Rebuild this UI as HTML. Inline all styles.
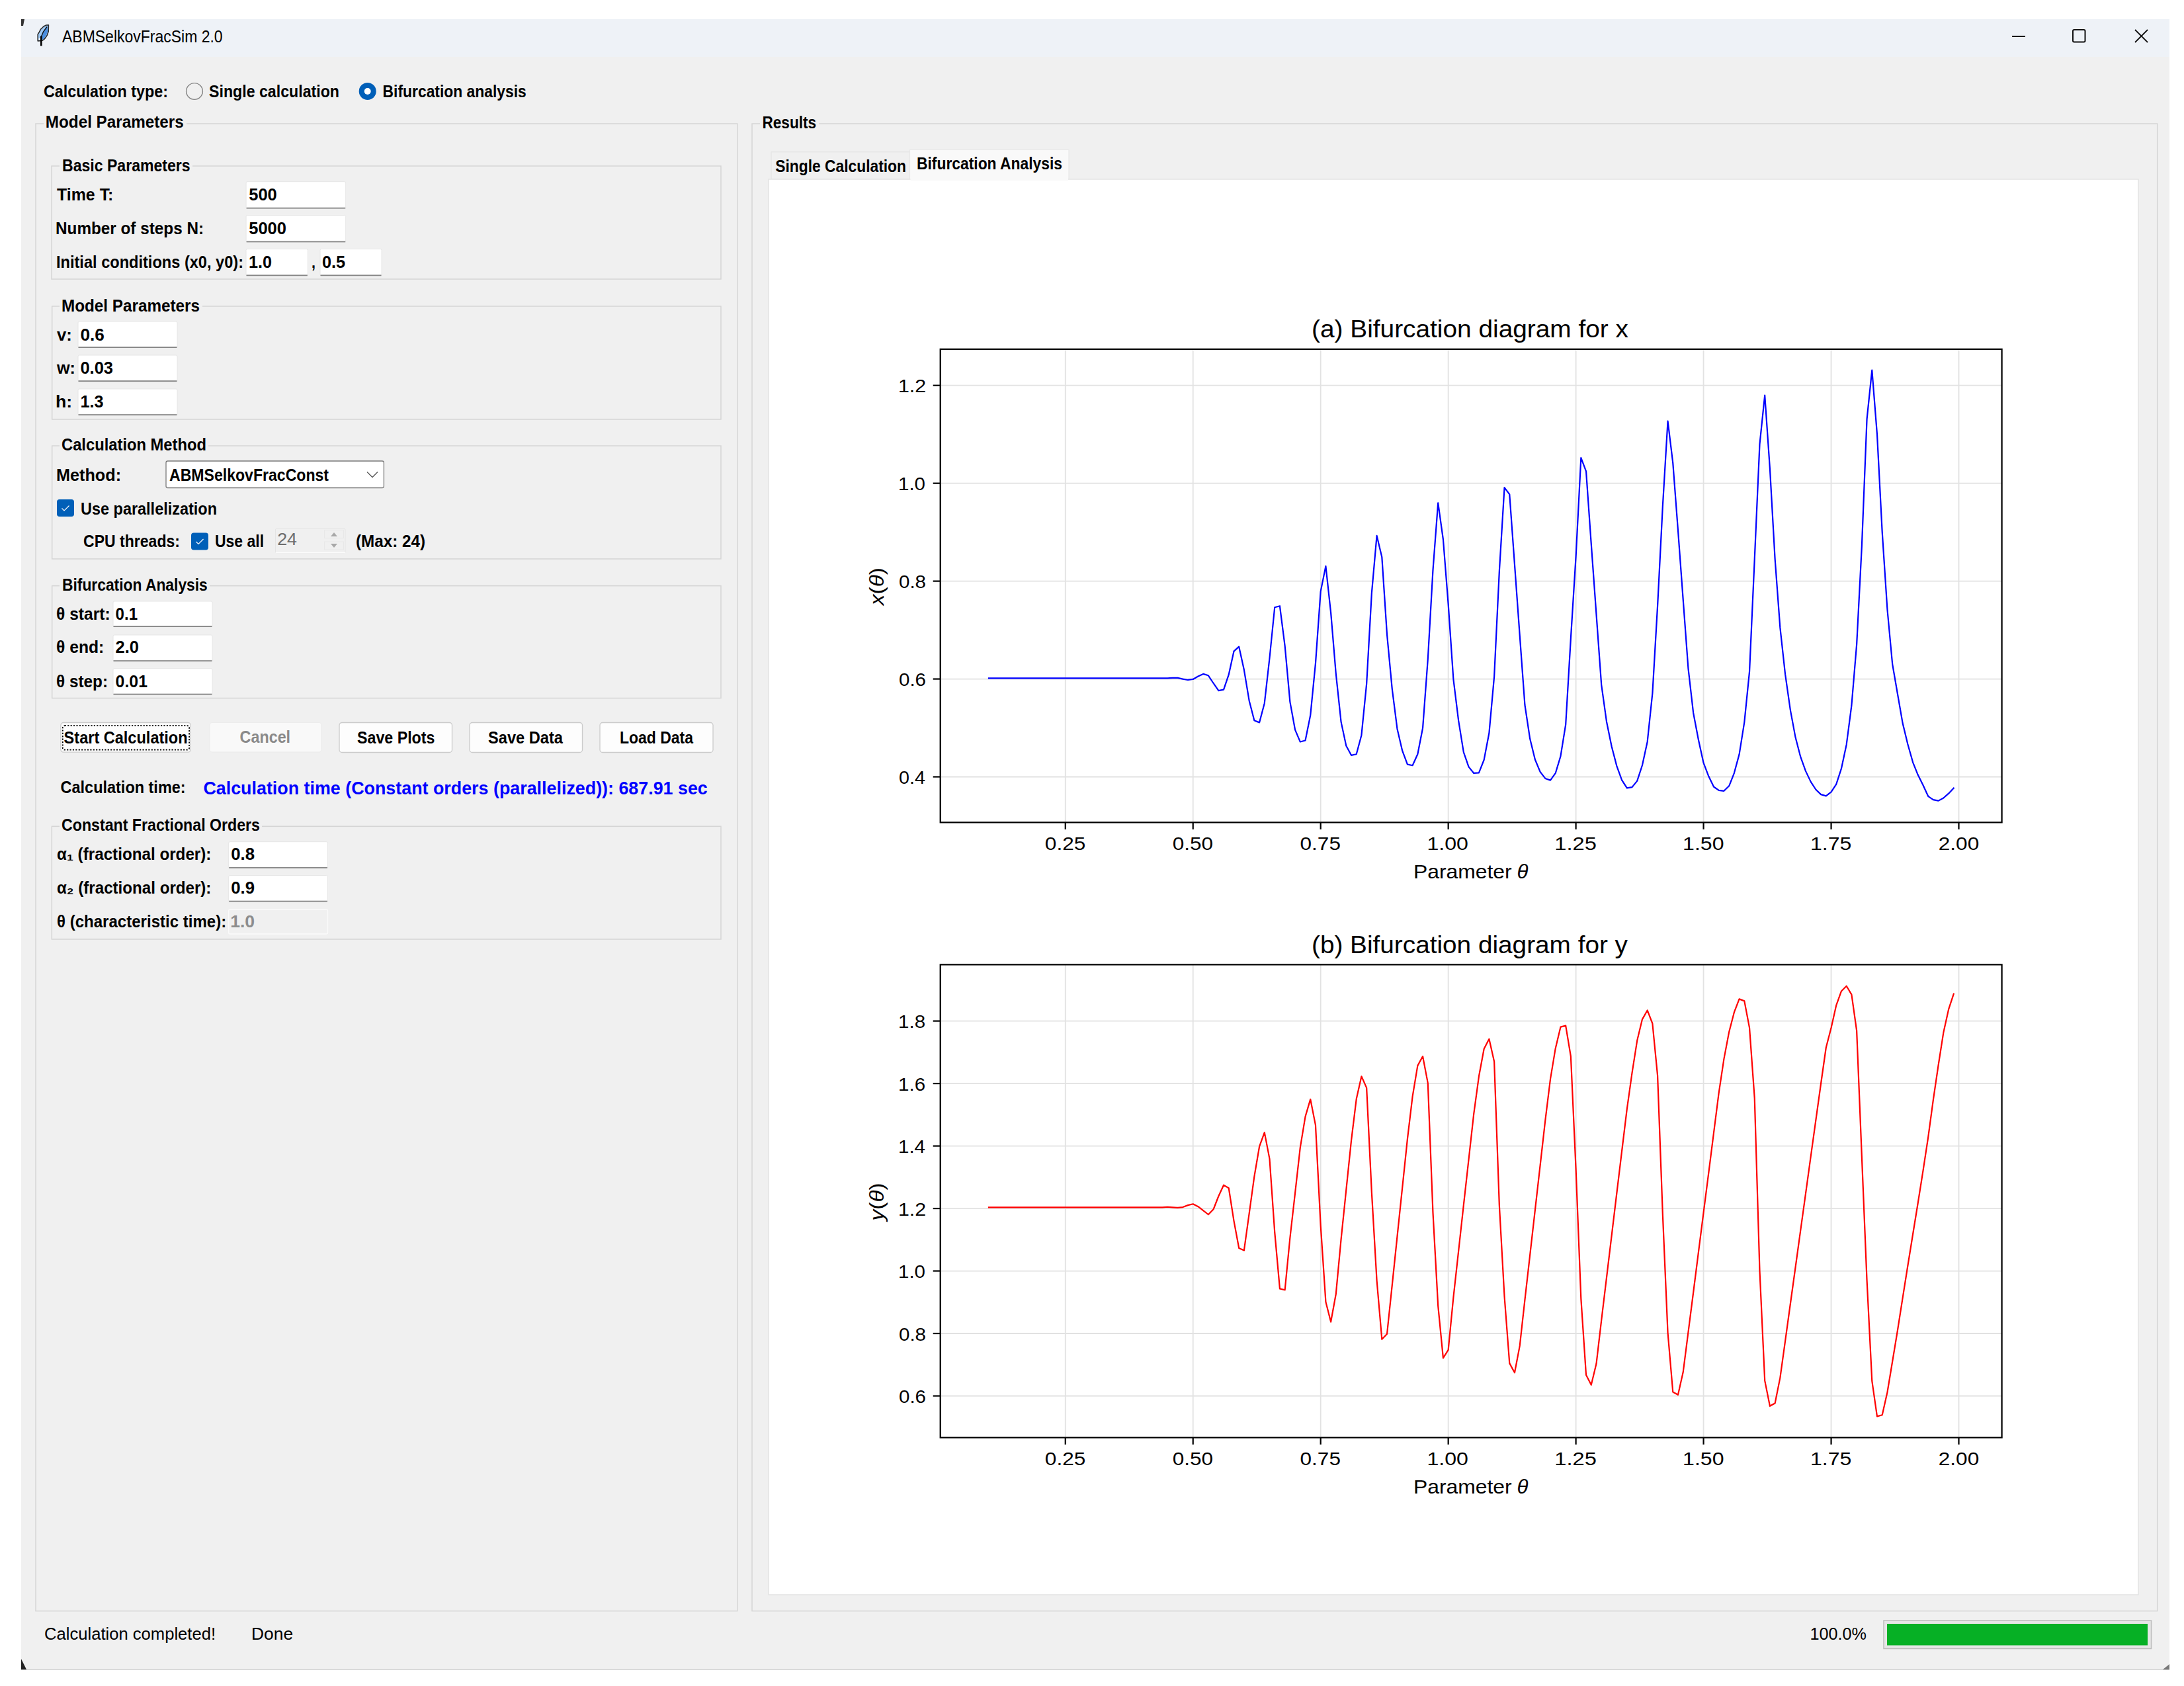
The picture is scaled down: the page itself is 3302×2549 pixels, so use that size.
<!DOCTYPE html>
<html><head><meta charset="utf-8"><title>ABMSelkovFracSim 2.0</title>
<style>html,body{margin:0;padding:0;background:#fff;width:3302px;height:2549px;overflow:hidden} text{font-family:"Liberation Sans",sans-serif}</style>
</head><body>
<svg width="3302" height="2549" viewBox="0 0 3302 2549" style="display:block"><rect x="0.00" y="0.00" width="3302.00" height="2549.00" fill="#ffffff"/>
<rect x="32.00" y="86.00" width="3248.00" height="2438.00" fill="#f0f0f0"/>
<rect x="32.00" y="29.00" width="3248.00" height="57.00" fill="#eef2f7"/>
<line x1="32.00" y1="2524.50" x2="3280.00" y2="2524.50" stroke="#c8c8c8" stroke-width="1.2"/>
<path d="M32 29 L37 29 L35 39 L32 39 Z" fill="#333"/>
<path d="M32 2508 L32 2524 L40 2524 Z" fill="#222"/>
<path d="M3280 2516 L3280 2524 L3270 2524 Z" fill="#777"/>
<g class="ic" transform="translate(50,32)"><path d="M23.4 5.7 L23.2 15.4 L21.2 21.4 L18.9 24.9 L16.2 27.9 L13.9 29.4 L7.2 29.9 L7.2 19.9 L9.5 16.2 L11.7 12 L13.9 10 L15.9 8 L19.9 6 Z" fill="#9ec9f4" stroke="#2a2a2a" stroke-width="1.6" stroke-linejoin="round"/><path d="M21.5 7.5 L22 15.4 L20.2 21 L17.9 24.3 L15.5 27 L13.4 28.4 L12.4 27.2 L13 21.5 L15.5 15.5 Z" fill="#4a8fe0"/><path d="M21 8.5 L15.5 16 L13 22 L12.4 27.5" fill="none" stroke="#111" stroke-width="1.4"/><path d="M12.3 22.5 L12.3 37.4" stroke="#000" stroke-width="2.6"/><rect x="8.5" y="26" width="2.5" height="2.5" fill="#fff"/></g>
<text x="94.00" y="63.80" font-size="25.5" font-family="Liberation Sans" fill="#000" textLength="242.60" lengthAdjust="spacingAndGlyphs">ABMSelkovFracSim 2.0</text>
<line x1="3042.00" y1="55.00" x2="3062.00" y2="55.00" stroke="#111" stroke-width="2"/>
<rect x="3134.00" y="45.00" width="18.50" height="18.50" fill="none" stroke="#111" stroke-width="2" rx="2"/>
<line x1="3228.00" y1="45.00" x2="3247.00" y2="64.00" stroke="#111" stroke-width="1.8"/>
<line x1="3247.00" y1="45.00" x2="3228.00" y2="64.00" stroke="#111" stroke-width="1.8"/>
<text x="66.00" y="147.00" font-size="25" font-family="Liberation Sans" fill="#000" font-weight="bold" textLength="188.01" lengthAdjust="spacingAndGlyphs">Calculation type:</text>
<circle cx="294" cy="138" r="12.4" fill="none" stroke="#858585" stroke-width="1.4"/>
<text x="316.00" y="147.00" font-size="25" font-family="Liberation Sans" fill="#000" font-weight="bold" textLength="197.00" lengthAdjust="spacingAndGlyphs">Single calculation</text>
<circle cx="555.7" cy="138" r="13" fill="#005fb8"/><circle cx="555.7" cy="138" r="5" fill="#ffffff"/>
<text x="578.60" y="146.80" font-size="25" font-family="Liberation Sans" fill="#000" font-weight="bold" textLength="217.22" lengthAdjust="spacingAndGlyphs">Bifurcation analysis</text>
<rect x="54.00" y="187.00" width="1060.80" height="2248.60" fill="none" stroke="#d5d5d5" stroke-width="1.5"/>
<rect x="66.00" y="184.00" width="216.00" height="6.00" fill="#f0f0f0"/>
<text x="68.80" y="193.00" font-size="25" font-family="Liberation Sans" fill="#000" font-weight="bold" textLength="209.01" lengthAdjust="spacingAndGlyphs">Model Parameters</text>
<rect x="1137.00" y="187.00" width="2124.70" height="2248.60" fill="none" stroke="#d5d5d5" stroke-width="1.5"/>
<rect x="1149.00" y="184.00" width="89.00" height="6.00" fill="#f0f0f0"/>
<text x="1152.40" y="194.00" font-size="25" font-family="Liberation Sans" fill="#000" font-weight="bold" textLength="81.80" lengthAdjust="spacingAndGlyphs">Results</text>
<rect x="78.00" y="251.00" width="1012.00" height="171.00" fill="none" stroke="#d5d5d5" stroke-width="1.5"/>
<rect x="90.00" y="248.00" width="201.00" height="6.00" fill="#f0f0f0"/>
<text x="94.00" y="259.00" font-size="25" font-family="Liberation Sans" fill="#000" font-weight="bold" textLength="193.60" lengthAdjust="spacingAndGlyphs">Basic Parameters</text>
<text x="86.00" y="303.00" font-size="25" font-family="Liberation Sans" fill="#000" font-weight="bold" textLength="85.40" lengthAdjust="spacingAndGlyphs">Time T:</text>
<rect x="372.10" y="274.70" width="150.60" height="40.80" fill="#ffffff" stroke="#e6e6e6" stroke-width="1" rx="2"/>
<rect x="372.60" y="313.70" width="149.60" height="1.80" fill="#868686"/>
<text x="376.20" y="303.00" font-size="25" font-family="Liberation Sans" fill="#000" font-weight="bold" textLength="42.59" lengthAdjust="spacingAndGlyphs">500</text>
<text x="84.00" y="354.00" font-size="25" font-family="Liberation Sans" fill="#000" font-weight="bold" textLength="224.05" lengthAdjust="spacingAndGlyphs">Number of steps N:</text>
<rect x="372.10" y="325.50" width="150.60" height="40.80" fill="#ffffff" stroke="#e6e6e6" stroke-width="1" rx="2"/>
<rect x="372.60" y="364.50" width="149.60" height="1.80" fill="#868686"/>
<text x="376.20" y="354.00" font-size="25" font-family="Liberation Sans" fill="#000" font-weight="bold" textLength="56.78" lengthAdjust="spacingAndGlyphs">5000</text>
<text x="85.00" y="405.00" font-size="25" font-family="Liberation Sans" fill="#000" font-weight="bold" textLength="283.01" lengthAdjust="spacingAndGlyphs">Initial conditions (x0, y0):</text>
<rect x="372.00" y="376.40" width="93.30" height="40.80" fill="#ffffff" stroke="#e6e6e6" stroke-width="1" rx="2"/>
<rect x="372.50" y="415.40" width="92.30" height="1.80" fill="#868686"/>
<text x="376.00" y="405.00" font-size="25" font-family="Liberation Sans" fill="#000" font-weight="bold" textLength="35.00" lengthAdjust="spacingAndGlyphs">1.0</text>
<text x="471.00" y="405.00" font-size="25" font-family="Liberation Sans" fill="#000" font-weight="bold" textLength="6.00" lengthAdjust="spacingAndGlyphs">,</text>
<rect x="484.00" y="376.40" width="93.00" height="40.80" fill="#ffffff" stroke="#e6e6e6" stroke-width="1" rx="2"/>
<rect x="484.50" y="415.40" width="92.00" height="1.80" fill="#868686"/>
<text x="487.00" y="405.00" font-size="25" font-family="Liberation Sans" fill="#000" font-weight="bold" textLength="35.17" lengthAdjust="spacingAndGlyphs">0.5</text>
<rect x="78.70" y="463.00" width="1011.30" height="171.00" fill="none" stroke="#d5d5d5" stroke-width="1.5"/>
<rect x="90.00" y="460.00" width="216.00" height="6.00" fill="#f0f0f0"/>
<text x="93.00" y="470.70" font-size="25" font-family="Liberation Sans" fill="#000" font-weight="bold" textLength="209.01" lengthAdjust="spacingAndGlyphs">Model Parameters</text>
<text x="86.00" y="515.00" font-size="25" font-family="Liberation Sans" fill="#000" font-weight="bold" textLength="22.83" lengthAdjust="spacingAndGlyphs">v:</text>
<rect x="118.00" y="486.00" width="150.00" height="40.00" fill="#ffffff" stroke="#e6e6e6" stroke-width="1" rx="2"/>
<rect x="118.50" y="524.20" width="149.00" height="1.80" fill="#868686"/>
<text x="121.40" y="515.00" font-size="25" font-family="Liberation Sans" fill="#000" font-weight="bold" textLength="36.45" lengthAdjust="spacingAndGlyphs">0.6</text>
<text x="86.00" y="565.00" font-size="25" font-family="Liberation Sans" fill="#000" font-weight="bold" textLength="28.00" lengthAdjust="spacingAndGlyphs">w:</text>
<rect x="118.00" y="537.00" width="150.00" height="40.00" fill="#ffffff" stroke="#e6e6e6" stroke-width="1" rx="2"/>
<rect x="118.50" y="575.20" width="149.00" height="1.80" fill="#868686"/>
<text x="121.40" y="565.00" font-size="25" font-family="Liberation Sans" fill="#000" font-weight="bold" textLength="49.62" lengthAdjust="spacingAndGlyphs">0.03</text>
<text x="84.00" y="616.00" font-size="25" font-family="Liberation Sans" fill="#000" font-weight="bold" textLength="25.23" lengthAdjust="spacingAndGlyphs">h:</text>
<rect x="118.00" y="588.00" width="150.00" height="40.00" fill="#ffffff" stroke="#e6e6e6" stroke-width="1" rx="2"/>
<rect x="118.50" y="626.20" width="149.00" height="1.80" fill="#868686"/>
<text x="121.40" y="616.00" font-size="25" font-family="Liberation Sans" fill="#000" font-weight="bold" textLength="35.00" lengthAdjust="spacingAndGlyphs">1.3</text>
<rect x="78.70" y="674.00" width="1011.30" height="171.00" fill="none" stroke="#d5d5d5" stroke-width="1.5"/>
<rect x="90.00" y="671.00" width="225.00" height="6.00" fill="#f0f0f0"/>
<text x="93.00" y="681.00" font-size="25" font-family="Liberation Sans" fill="#000" font-weight="bold" textLength="219.01" lengthAdjust="spacingAndGlyphs">Calculation Method</text>
<text x="85.00" y="727.00" font-size="25" font-family="Liberation Sans" fill="#000" font-weight="bold" textLength="98.09" lengthAdjust="spacingAndGlyphs">Method:</text>
<rect x="251.00" y="697.00" width="329.40" height="40.50" fill="#ffffff" stroke="#7a7a7a" stroke-width="1.3" rx="2.5"/>
<text x="256.00" y="727.00" font-size="25" font-family="Liberation Sans" fill="#000" font-weight="bold" textLength="241.00" lengthAdjust="spacingAndGlyphs">ABMSelkovFracConst</text>
<path d="M555 713.5 L563 721.5 L571 713.5" fill="none" stroke="#555" stroke-width="1.3"/>
<rect x="86.00" y="755.00" width="26.00" height="26.00" fill="#005fb8" rx="4"/>
<path d="M93.5 768.5 L97 772 L104.5 764.5" fill="none" stroke="#ffffff" stroke-width="1.1"/>
<text x="122.00" y="777.50" font-size="25" font-family="Liberation Sans" fill="#000" font-weight="bold" textLength="206.00" lengthAdjust="spacingAndGlyphs">Use parallelization</text>
<text x="126.00" y="827.00" font-size="25" font-family="Liberation Sans" fill="#000" font-weight="bold" textLength="146.02" lengthAdjust="spacingAndGlyphs">CPU threads:</text>
<rect x="289.00" y="805.50" width="26.00" height="26.00" fill="#005fb8" rx="4"/>
<path d="M296.5 819.0 L300 822.5 L307.5 815.0" fill="none" stroke="#ffffff" stroke-width="1.1"/>
<text x="325.00" y="827.00" font-size="25" font-family="Liberation Sans" fill="#000" font-weight="bold" textLength="74.02" lengthAdjust="spacingAndGlyphs">Use all</text>
<rect x="416.50" y="799.00" width="105.50" height="37.00" fill="#f0f0f0" stroke="#e4e4e4" stroke-width="1" rx="2"/>
<line x1="417.00" y1="835.50" x2="522.00" y2="835.50" stroke="#fbfbfb" stroke-width="1.5"/>
<rect x="490.50" y="801.30" width="29.00" height="12.30" fill="#f0f0f0" stroke="#e8e8e8" stroke-width="1"/>
<rect x="490.50" y="819.00" width="29.00" height="12.00" fill="#f0f0f0" stroke="#e8e8e8" stroke-width="1"/>
<path d="M500 811 L505 805 L510 811 Z" fill="#a8a8a8"/><path d="M500 822 L505 828 L510 822 Z" fill="#a8a8a8"/>
<text x="419.20" y="824.30" font-size="25" font-family="Liberation Sans" fill="#6d6d6d" textLength="29.85" lengthAdjust="spacingAndGlyphs">24</text>
<text x="538.00" y="827.00" font-size="25" font-family="Liberation Sans" fill="#000" font-weight="bold" textLength="105.00" lengthAdjust="spacingAndGlyphs">(Max: 24)</text>
<rect x="78.70" y="885.70" width="1011.30" height="169.80" fill="none" stroke="#d5d5d5" stroke-width="1.5"/>
<rect x="90.00" y="882.70" width="227.00" height="6.00" fill="#f0f0f0"/>
<text x="94.00" y="892.60" font-size="25" font-family="Liberation Sans" fill="#000" font-weight="bold" textLength="219.80" lengthAdjust="spacingAndGlyphs">Bifurcation Analysis</text>
<text x="85.00" y="937.00" font-size="25" font-family="Liberation Sans" fill="#000" font-weight="bold" textLength="81.66" lengthAdjust="spacingAndGlyphs">θ start:</text>
<rect x="171.00" y="909.00" width="150.00" height="39.00" fill="#ffffff" stroke="#e6e6e6" stroke-width="1" rx="2"/>
<rect x="171.50" y="946.20" width="149.00" height="1.80" fill="#868686"/>
<text x="174.60" y="937.00" font-size="25" font-family="Liberation Sans" fill="#000" font-weight="bold" textLength="33.57" lengthAdjust="spacingAndGlyphs">0.1</text>
<text x="85.00" y="987.40" font-size="25" font-family="Liberation Sans" fill="#000" font-weight="bold" textLength="72.27" lengthAdjust="spacingAndGlyphs">θ end:</text>
<rect x="171.00" y="960.00" width="150.00" height="40.00" fill="#ffffff" stroke="#e6e6e6" stroke-width="1" rx="2"/>
<rect x="171.50" y="998.20" width="149.00" height="1.80" fill="#868686"/>
<text x="174.60" y="987.40" font-size="25" font-family="Liberation Sans" fill="#000" font-weight="bold" textLength="35.40" lengthAdjust="spacingAndGlyphs">2.0</text>
<text x="85.00" y="1039.00" font-size="25" font-family="Liberation Sans" fill="#000" font-weight="bold" textLength="78.04" lengthAdjust="spacingAndGlyphs">θ step:</text>
<rect x="171.00" y="1010.70" width="150.00" height="39.80" fill="#ffffff" stroke="#e6e6e6" stroke-width="1" rx="2"/>
<rect x="171.50" y="1048.70" width="149.00" height="1.80" fill="#868686"/>
<text x="174.60" y="1039.00" font-size="25" font-family="Liberation Sans" fill="#000" font-weight="bold" textLength="48.40" lengthAdjust="spacingAndGlyphs">0.01</text>
<rect x="91.90" y="1092.50" width="196.40" height="44.60" fill="#fdfdfd" stroke="#cbcbcb" stroke-width="1.3" rx="4"/>
<rect x="94.80" y="1097.20" width="191.30" height="36.50" fill="none" stroke="#000" stroke-width="1.8" rx="3" stroke-dasharray="2.2 2.2"/>
<text x="96.60" y="1124.30" font-size="25" font-family="Liberation Sans" fill="#000" font-weight="bold" textLength="187.01" lengthAdjust="spacingAndGlyphs">Start Calculation</text>
<rect x="316.90" y="1092.50" width="169.10" height="44.60" fill="#f9f9f9" stroke="#ececec" stroke-width="1.2" rx="4"/>
<text x="362.60" y="1123.40" font-size="25" font-family="Liberation Sans" fill="#8a8a8a" font-weight="bold" textLength="76.50" lengthAdjust="spacingAndGlyphs">Cancel</text>
<rect x="513.00" y="1092.50" width="170.50" height="45.00" fill="#fdfdfd" stroke="#cbcbcb" stroke-width="1.3" rx="4"/>
<text x="540.00" y="1124.00" font-size="25" font-family="Liberation Sans" fill="#000" font-weight="bold" textLength="117.40" lengthAdjust="spacingAndGlyphs">Save Plots</text>
<rect x="710.00" y="1092.50" width="170.50" height="45.00" fill="#fdfdfd" stroke="#cbcbcb" stroke-width="1.3" rx="4"/>
<text x="738.00" y="1124.00" font-size="25" font-family="Liberation Sans" fill="#000" font-weight="bold" textLength="113.00" lengthAdjust="spacingAndGlyphs">Save Data</text>
<rect x="907.00" y="1092.50" width="171.00" height="45.00" fill="#fdfdfd" stroke="#cbcbcb" stroke-width="1.3" rx="4"/>
<text x="937.00" y="1124.00" font-size="25" font-family="Liberation Sans" fill="#000" font-weight="bold" textLength="110.99" lengthAdjust="spacingAndGlyphs">Load Data</text>
<text x="91.60" y="1199.00" font-size="25" font-family="Liberation Sans" fill="#000" font-weight="bold" textLength="189.02" lengthAdjust="spacingAndGlyphs">Calculation time:</text>
<text x="307.40" y="1201.00" font-size="27" font-family="Liberation Sans" fill="#0000ff" font-weight="bold" textLength="762.40" lengthAdjust="spacingAndGlyphs">Calculation time (Constant orders (parallelized)): 687.91 sec</text>
<rect x="78.30" y="1249.30" width="1011.70" height="170.70" fill="none" stroke="#d5d5d5" stroke-width="1.5"/>
<rect x="90.00" y="1246.30" width="306.00" height="6.00" fill="#f0f0f0"/>
<text x="93.00" y="1256.00" font-size="25" font-family="Liberation Sans" fill="#000" font-weight="bold" textLength="300.00" lengthAdjust="spacingAndGlyphs">Constant Fractional Orders</text>
<text x="86.00" y="1300.00" font-size="25" font-family="Liberation Sans" fill="#000" font-weight="bold" textLength="233.41" lengthAdjust="spacingAndGlyphs">α₁ (fractional order):</text>
<rect x="345.70" y="1272.70" width="149.70" height="40.00" fill="#ffffff" stroke="#e6e6e6" stroke-width="1" rx="2"/>
<rect x="346.20" y="1310.90" width="148.70" height="1.80" fill="#868686"/>
<text x="349.20" y="1300.00" font-size="25" font-family="Liberation Sans" fill="#000" font-weight="bold" textLength="35.82" lengthAdjust="spacingAndGlyphs">0.8</text>
<text x="86.00" y="1351.00" font-size="25" font-family="Liberation Sans" fill="#000" font-weight="bold" textLength="233.41" lengthAdjust="spacingAndGlyphs">α₂ (fractional order):</text>
<rect x="345.70" y="1323.50" width="149.70" height="40.00" fill="#ffffff" stroke="#e6e6e6" stroke-width="1" rx="2"/>
<rect x="346.20" y="1361.70" width="148.70" height="1.80" fill="#868686"/>
<text x="349.20" y="1351.00" font-size="25" font-family="Liberation Sans" fill="#000" font-weight="bold" textLength="35.82" lengthAdjust="spacingAndGlyphs">0.9</text>
<text x="86.00" y="1402.00" font-size="25" font-family="Liberation Sans" fill="#000" font-weight="bold" textLength="256.22" lengthAdjust="spacingAndGlyphs">θ (characteristic time):</text>
<rect x="345.70" y="1375.00" width="149.70" height="37.00" fill="#f0f0f0" stroke="#fafafa" stroke-width="1.5" rx="2"/>
<text x="348.20" y="1402.00" font-size="25" font-family="Liberation Sans" fill="#8d8d8d" font-weight="bold" textLength="36.96" lengthAdjust="spacingAndGlyphs">1.0</text>
<rect x="1166.00" y="229.70" width="209.50" height="41.00" fill="#f0f0f0" stroke="#e3e3e3" stroke-width="1.2"/>
<rect x="1375.50" y="226.40" width="240.50" height="45.00" fill="#f9f9f9" stroke="#e8e8e8" stroke-width="1.2"/>
<rect x="1162.00" y="271.00" width="2071.00" height="2140.00" fill="#ffffff" stroke="#e3e3e3" stroke-width="1.5"/>
<rect x="1376.50" y="268.00" width="238.50" height="5.00" fill="#f9f9f9"/>
<text x="1172.20" y="260.00" font-size="25" font-family="Liberation Sans" fill="#000" font-weight="bold" textLength="197.80" lengthAdjust="spacingAndGlyphs">Single Calculation</text>
<text x="1386.00" y="255.80" font-size="25" font-family="Liberation Sans" fill="#000" font-weight="bold" textLength="220.00" lengthAdjust="spacingAndGlyphs">Bifurcation Analysis</text>
<text x="67.00" y="2479.00" font-size="25" font-family="Liberation Sans" fill="#000" textLength="259.01" lengthAdjust="spacingAndGlyphs">Calculation completed!</text>
<text x="380.00" y="2479.00" font-size="25" font-family="Liberation Sans" fill="#000" textLength="63.05" lengthAdjust="spacingAndGlyphs">Done</text>
<text x="2736.40" y="2479.00" font-size="25" font-family="Liberation Sans" fill="#000" textLength="85.45" lengthAdjust="spacingAndGlyphs">100.0%</text>
<rect x="2848.00" y="2450.00" width="404.50" height="42.50" fill="#e6e6e6" stroke="#bcbcbc" stroke-width="1.5"/>
<rect x="2853.00" y="2455.00" width="394.00" height="32.50" fill="#06b025"/>
<line x1="1610.76" y1="527.90" x2="1610.76" y2="1243.40" stroke="#e2e2e2" stroke-width="1.8"/>
<line x1="1803.72" y1="527.90" x2="1803.72" y2="1243.40" stroke="#e2e2e2" stroke-width="1.8"/>
<line x1="1996.69" y1="527.90" x2="1996.69" y2="1243.40" stroke="#e2e2e2" stroke-width="1.8"/>
<line x1="2189.65" y1="527.90" x2="2189.65" y2="1243.40" stroke="#e2e2e2" stroke-width="1.8"/>
<line x1="2382.61" y1="527.90" x2="2382.61" y2="1243.40" stroke="#e2e2e2" stroke-width="1.8"/>
<line x1="2575.57" y1="527.90" x2="2575.57" y2="1243.40" stroke="#e2e2e2" stroke-width="1.8"/>
<line x1="2768.54" y1="527.90" x2="2768.54" y2="1243.40" stroke="#e2e2e2" stroke-width="1.8"/>
<line x1="2961.50" y1="527.90" x2="2961.50" y2="1243.40" stroke="#e2e2e2" stroke-width="1.8"/>
<line x1="1421.70" y1="1174.50" x2="3026.60" y2="1174.50" stroke="#e2e2e2" stroke-width="1.8"/>
<line x1="1421.70" y1="1026.55" x2="3026.60" y2="1026.55" stroke="#e2e2e2" stroke-width="1.8"/>
<line x1="1421.70" y1="878.60" x2="3026.60" y2="878.60" stroke="#e2e2e2" stroke-width="1.8"/>
<line x1="1421.70" y1="730.65" x2="3026.60" y2="730.65" stroke="#e2e2e2" stroke-width="1.8"/>
<line x1="1421.70" y1="582.70" x2="3026.60" y2="582.70" stroke="#e2e2e2" stroke-width="1.8"/>
<polyline points="1494.98,1025.37 1502.70,1025.37 1510.42,1025.37 1518.14,1025.37 1525.86,1025.37 1533.58,1025.37 1541.30,1025.37 1549.01,1025.37 1556.73,1025.37 1564.45,1025.37 1572.17,1025.37 1579.89,1025.37 1587.61,1025.37 1595.33,1025.37 1603.04,1025.37 1610.76,1025.37 1618.48,1025.37 1626.20,1025.37 1633.92,1025.37 1641.64,1025.37 1649.36,1025.37 1657.07,1025.37 1664.79,1025.37 1672.51,1025.37 1680.23,1025.37 1687.95,1025.37 1695.67,1025.37 1703.38,1025.37 1711.10,1025.37 1718.82,1025.37 1726.54,1025.37 1734.26,1025.37 1741.98,1025.37 1749.70,1025.37 1757.41,1025.37 1765.13,1025.34 1772.85,1024.94 1780.57,1024.94 1788.29,1026.55 1796.01,1027.96 1803.72,1026.95 1811.44,1022.52 1819.16,1018.90 1826.88,1021.32 1834.60,1032.99 1842.32,1044.06 1850.04,1042.65 1857.75,1019.91 1865.47,984.68 1873.19,977.64 1880.91,1012.86 1888.63,1059.16 1896.35,1089.35 1904.07,1092.37 1911.78,1063.19 1919.50,994.75 1927.22,918.25 1934.94,916.24 1942.66,976.63 1950.38,1061.17 1958.09,1103.44 1965.81,1121.56 1973.53,1119.55 1981.25,1081.30 1988.97,1002.80 1996.69,894.10 2004.41,855.85 2012.12,926.31 2019.84,1018.90 2027.56,1091.37 2035.28,1127.45 2043.00,1141.80 2050.72,1140.25 2058.44,1111.47 2066.15,1033.95 2073.87,896.65 2081.59,809.95 2089.31,842.35 2097.03,959.38 2104.75,1041.35 2112.47,1101.93 2120.18,1134.92 2127.90,1155.64 2135.62,1157.26 2143.34,1140.25 2151.06,1100.82 2158.78,996.96 2166.49,861.59 2174.21,760.24 2181.93,815.50 2189.65,913.37 2197.37,1026.55 2205.09,1089.13 2212.81,1137.07 2220.52,1159.41 2228.24,1168.95 2235.96,1168.43 2243.68,1148.76 2251.40,1108.29 2259.12,1022.85 2266.84,863.81 2274.55,737.09 2282.27,747.37 2289.99,853.82 2297.71,960.42 2305.43,1065.76 2313.15,1116.80 2320.86,1148.24 2328.58,1166.81 2336.30,1176.94 2344.02,1179.60 2351.74,1168.95 2359.46,1143.43 2367.18,1095.49 2374.89,965.15 2382.61,841.61 2390.33,692.18 2398.05,712.67 2405.77,822.38 2413.49,928.90 2421.20,1035.43 2428.92,1090.69 2436.64,1128.56 2444.36,1158.15 2452.08,1179.46 2459.80,1191.29 2467.52,1190.11 2475.23,1180.64 2482.95,1156.97 2490.67,1121.46 2498.39,1048.08 2506.11,915.59 2513.83,765.42 2521.55,636.70 2529.26,699.88 2536.98,801.67 2544.70,906.41 2552.42,1010.28 2560.14,1077.67 2567.86,1118.28 2575.57,1153.42 2583.29,1173.54 2591.01,1189.52 2598.73,1194.84 2606.45,1195.80 2614.17,1188.33 2621.89,1168.80 2629.60,1140.40 2637.32,1091.87 2645.04,1015.45 2652.76,845.02 2660.48,671.62 2668.20,597.50 2675.92,708.46 2683.63,845.31 2691.35,948.88 2699.07,1019.15 2706.79,1073.15 2714.51,1114.58 2722.23,1144.17 2729.94,1165.62 2737.66,1181.90 2745.38,1193.73 2753.10,1201.13 2760.82,1203.35 2768.54,1197.43 2776.26,1185.60 2783.97,1161.92 2791.69,1125.68 2799.41,1066.50 2807.13,974.32 2814.85,826.23 2822.57,633.67 2830.29,559.62 2838.00,656.67 2845.72,804.62 2853.44,921.51 2861.16,1003.99 2868.88,1048.74 2876.60,1093.13 2884.31,1124.94 2892.03,1152.31 2899.75,1171.54 2907.47,1187.08 2915.19,1203.79 2922.91,1209.19 2930.63,1210.60 2938.34,1206.46 2946.06,1199.65 2953.78,1191.51" fill="none" stroke="#0000ff" stroke-width="2.2" stroke-linejoin="round" stroke-linecap="square"/>
<rect x="1421.70" y="527.90" width="1604.90" height="715.50" fill="none" stroke="#000" stroke-width="2.2"/>
<line x1="1610.76" y1="1243.40" x2="1610.76" y2="1253.90" stroke="#000" stroke-width="2.2"/>
<text x="1579.85" y="1285.30" font-size="28.5" font-family="Liberation Sans" fill="#000" textLength="61.43" lengthAdjust="spacingAndGlyphs">0.25</text>
<line x1="1803.72" y1="1243.40" x2="1803.72" y2="1253.90" stroke="#000" stroke-width="2.2"/>
<text x="1772.70" y="1285.30" font-size="28.5" font-family="Liberation Sans" fill="#000" textLength="61.41" lengthAdjust="spacingAndGlyphs">0.50</text>
<line x1="1996.69" y1="1243.40" x2="1996.69" y2="1253.90" stroke="#000" stroke-width="2.2"/>
<text x="1965.55" y="1285.30" font-size="28.5" font-family="Liberation Sans" fill="#000" textLength="61.41" lengthAdjust="spacingAndGlyphs">0.75</text>
<line x1="2189.65" y1="1243.40" x2="2189.65" y2="1253.90" stroke="#000" stroke-width="2.2"/>
<text x="2157.40" y="1285.30" font-size="28.5" font-family="Liberation Sans" fill="#000" textLength="62.49" lengthAdjust="spacingAndGlyphs">1.00</text>
<line x1="2382.61" y1="1243.40" x2="2382.61" y2="1253.90" stroke="#000" stroke-width="2.2"/>
<text x="2350.25" y="1285.30" font-size="28.5" font-family="Liberation Sans" fill="#000" textLength="63.55" lengthAdjust="spacingAndGlyphs">1.25</text>
<line x1="2575.57" y1="1243.40" x2="2575.57" y2="1253.90" stroke="#000" stroke-width="2.2"/>
<text x="2544.10" y="1285.30" font-size="28.5" font-family="Liberation Sans" fill="#000" textLength="62.47" lengthAdjust="spacingAndGlyphs">1.50</text>
<line x1="2768.54" y1="1243.40" x2="2768.54" y2="1253.90" stroke="#000" stroke-width="2.2"/>
<text x="2736.95" y="1285.30" font-size="28.5" font-family="Liberation Sans" fill="#000" textLength="62.47" lengthAdjust="spacingAndGlyphs">1.75</text>
<line x1="2961.50" y1="1243.40" x2="2961.50" y2="1253.90" stroke="#000" stroke-width="2.2"/>
<text x="2930.80" y="1285.30" font-size="28.5" font-family="Liberation Sans" fill="#000" textLength="61.41" lengthAdjust="spacingAndGlyphs">2.00</text>
<line x1="1410.70" y1="1174.50" x2="1421.70" y2="1174.50" stroke="#000" stroke-width="2.2"/>
<text x="1359.00" y="1185.00" font-size="28.5" font-family="Liberation Sans" fill="#000" textLength="39.99" lengthAdjust="spacingAndGlyphs">0.4</text>
<line x1="1410.70" y1="1026.55" x2="1421.70" y2="1026.55" stroke="#000" stroke-width="2.2"/>
<text x="1359.00" y="1037.05" font-size="28.5" font-family="Liberation Sans" fill="#000" textLength="41.04" lengthAdjust="spacingAndGlyphs">0.6</text>
<line x1="1410.70" y1="878.60" x2="1421.70" y2="878.60" stroke="#000" stroke-width="2.2"/>
<text x="1359.00" y="889.10" font-size="28.5" font-family="Liberation Sans" fill="#000" textLength="41.04" lengthAdjust="spacingAndGlyphs">0.8</text>
<line x1="1410.70" y1="730.65" x2="1421.70" y2="730.65" stroke="#000" stroke-width="2.2"/>
<text x="1358.00" y="741.15" font-size="28.5" font-family="Liberation Sans" fill="#000" textLength="41.04" lengthAdjust="spacingAndGlyphs">1.0</text>
<line x1="1410.70" y1="582.70" x2="1421.70" y2="582.70" stroke="#000" stroke-width="2.2"/>
<text x="1358.00" y="593.20" font-size="28.5" font-family="Liberation Sans" fill="#000" textLength="42.15" lengthAdjust="spacingAndGlyphs">1.2</text>
<text x="1983.00" y="510.40" font-size="37" font-family="Liberation Sans" fill="#000" textLength="479.01" lengthAdjust="spacingAndGlyphs">(a) Bifurcation diagram for x</text>
<text x="2137.00" y="1327.60" font-size="29.5" font-family="Liberation Sans" fill="#000" textLength="148.61" lengthAdjust="spacingAndGlyphs">Parameter</text>
<text x="2293.40" y="1327.60" font-size="29.5" font-family="Liberation Sans" fill="#000" font-style="italic" textLength="16.94" lengthAdjust="spacingAndGlyphs">θ</text>
<g transform="translate(1335.5,915.1500000000001) rotate(-90)"><text x="0" y="0" font-size="29.5" font-family="Liberation Sans" textLength="57" lengthAdjust="spacingAndGlyphs"><tspan font-style="italic">x</tspan>(<tspan font-style="italic">θ</tspan>)</text></g>
<line x1="1610.76" y1="1458.40" x2="1610.76" y2="2173.40" stroke="#e2e2e2" stroke-width="1.8"/>
<line x1="1803.72" y1="1458.40" x2="1803.72" y2="2173.40" stroke="#e2e2e2" stroke-width="1.8"/>
<line x1="1996.69" y1="1458.40" x2="1996.69" y2="2173.40" stroke="#e2e2e2" stroke-width="1.8"/>
<line x1="2189.65" y1="1458.40" x2="2189.65" y2="2173.40" stroke="#e2e2e2" stroke-width="1.8"/>
<line x1="2382.61" y1="1458.40" x2="2382.61" y2="2173.40" stroke="#e2e2e2" stroke-width="1.8"/>
<line x1="2575.57" y1="1458.40" x2="2575.57" y2="2173.40" stroke="#e2e2e2" stroke-width="1.8"/>
<line x1="2768.54" y1="1458.40" x2="2768.54" y2="2173.40" stroke="#e2e2e2" stroke-width="1.8"/>
<line x1="2961.50" y1="1458.40" x2="2961.50" y2="2173.40" stroke="#e2e2e2" stroke-width="1.8"/>
<line x1="1421.70" y1="2110.50" x2="3026.60" y2="2110.50" stroke="#e2e2e2" stroke-width="1.8"/>
<line x1="1421.70" y1="2016.02" x2="3026.60" y2="2016.02" stroke="#e2e2e2" stroke-width="1.8"/>
<line x1="1421.70" y1="1921.54" x2="3026.60" y2="1921.54" stroke="#e2e2e2" stroke-width="1.8"/>
<line x1="1421.70" y1="1827.06" x2="3026.60" y2="1827.06" stroke="#e2e2e2" stroke-width="1.8"/>
<line x1="1421.70" y1="1732.58" x2="3026.60" y2="1732.58" stroke="#e2e2e2" stroke-width="1.8"/>
<line x1="1421.70" y1="1638.10" x2="3026.60" y2="1638.10" stroke="#e2e2e2" stroke-width="1.8"/>
<line x1="1421.70" y1="1543.62" x2="3026.60" y2="1543.62" stroke="#e2e2e2" stroke-width="1.8"/>
<polyline points="1494.98,1825.41 1502.70,1825.41 1510.42,1825.41 1518.14,1825.41 1525.86,1825.41 1533.58,1825.41 1541.30,1825.41 1549.01,1825.41 1556.73,1825.41 1564.45,1825.41 1572.17,1825.41 1579.89,1825.41 1587.61,1825.41 1595.33,1825.41 1603.04,1825.41 1610.76,1825.41 1618.48,1825.41 1626.20,1825.41 1633.92,1825.41 1641.64,1825.41 1649.36,1825.41 1657.07,1825.41 1664.79,1825.41 1672.51,1825.41 1680.23,1825.41 1687.95,1825.41 1695.67,1825.41 1703.38,1825.41 1711.10,1825.41 1718.82,1825.41 1726.54,1825.41 1734.26,1825.41 1741.98,1825.41 1749.70,1825.41 1757.41,1825.41 1765.13,1824.77 1772.85,1825.31 1780.57,1825.84 1788.29,1825.04 1796.01,1822.10 1803.72,1820.23 1811.44,1824.24 1819.16,1830.11 1826.88,1836.25 1834.60,1828.24 1842.32,1808.49 1850.04,1791.67 1857.75,1796.21 1865.47,1845.60 1873.19,1886.97 1880.91,1890.44 1888.63,1834.92 1896.35,1778.86 1904.07,1733.48 1911.78,1712.12 1919.50,1752.16 1927.22,1862.95 1934.94,1948.37 1942.66,1950.24 1950.38,1871.49 1958.09,1803.68 1965.81,1734.81 1973.53,1688.09 1981.25,1661.93 1988.97,1701.15 1996.69,1852.88 2004.41,1968.30 2012.12,1998.56 2019.84,1956.19 2027.56,1873.87 2035.28,1799.21 2043.00,1724.55 2050.72,1661.60 2058.44,1627.30 2066.15,1644.65 2073.87,1802.84 2081.59,1936.01 2089.31,2024.79 2097.03,2016.72 2104.75,1943.28 2112.47,1869.43 2120.18,1795.98 2127.90,1722.13 2135.62,1657.56 2143.34,1611.15 2151.06,1597.03 2158.78,1637.38 2166.49,1833.91 2174.21,1974.35 2181.93,2053.04 2189.65,2040.94 2197.37,1961.84 2205.09,1892.03 2212.81,1822.21 2220.52,1753.20 2228.24,1683.79 2235.96,1627.30 2243.68,1585.73 2251.40,1570.80 2259.12,1605.10 2266.84,1822.21 2274.55,1960.23 2282.27,2061.11 2289.99,2075.24 2297.71,2034.88 2305.43,1965.47 2313.15,1897.68 2320.86,1829.88 2328.58,1762.08 2336.30,1693.88 2344.02,1631.33 2351.74,1584.92 2359.46,1552.64 2367.18,1550.62 2374.89,1597.03 2382.61,1767.30 2390.33,1963.63 2398.05,2078.86 2405.77,2093.80 2413.49,2061.79 2421.20,1996.06 2428.92,1932.04 2436.64,1868.02 2444.36,1804.00 2452.08,1740.41 2459.80,1676.82 2467.52,1622.19 2475.23,1573.10 2482.95,1541.09 2490.67,1527.43 2498.39,1547.49 2506.11,1626.45 2513.83,1835.59 2521.55,2014.84 2529.26,2104.47 2536.98,2108.74 2544.70,2074.60 2552.42,2014.42 2560.14,1954.24 2567.86,1893.63 2575.57,1833.45 2583.29,1773.27 2591.01,1712.67 2598.73,1652.06 2606.45,1600.85 2614.17,1560.30 2621.89,1530.42 2629.60,1510.36 2637.32,1513.35 2645.04,1553.90 2652.76,1660.60 2660.48,1920.95 2668.20,2087.40 2675.92,2125.81 2683.63,2121.55 2691.35,2083.13 2699.07,2027.65 2706.79,1971.74 2714.51,1916.25 2722.23,1860.34 2729.94,1804.86 2737.66,1748.95 2745.38,1693.46 2753.10,1637.98 2760.82,1583.77 2768.54,1553.98 2776.26,1519.80 2783.97,1498.45 2791.69,1490.76 2799.41,1503.57 2807.13,1558.25 2814.85,1748.34 2822.57,1935.44 2830.29,2087.94 2838.00,2141.33 2845.72,2139.20 2853.44,2105.02 2861.16,2058.54 2868.88,2011.77 2876.60,1962.64 2884.31,1913.98 2892.03,1866.27 2899.75,1818.79 2907.47,1770.09 2915.19,1719.49 2922.91,1662.66 2930.63,1610.23 2938.34,1561.10 2946.06,1526.14 2953.78,1502.71" fill="none" stroke="#ff0000" stroke-width="2.2" stroke-linejoin="round" stroke-linecap="square"/>
<rect x="1421.70" y="1458.40" width="1604.90" height="715.00" fill="none" stroke="#000" stroke-width="2.2"/>
<line x1="1610.76" y1="2173.40" x2="1610.76" y2="2183.90" stroke="#000" stroke-width="2.2"/>
<text x="1579.85" y="2215.30" font-size="28.5" font-family="Liberation Sans" fill="#000" textLength="61.43" lengthAdjust="spacingAndGlyphs">0.25</text>
<line x1="1803.72" y1="2173.40" x2="1803.72" y2="2183.90" stroke="#000" stroke-width="2.2"/>
<text x="1772.70" y="2215.30" font-size="28.5" font-family="Liberation Sans" fill="#000" textLength="61.41" lengthAdjust="spacingAndGlyphs">0.50</text>
<line x1="1996.69" y1="2173.40" x2="1996.69" y2="2183.90" stroke="#000" stroke-width="2.2"/>
<text x="1965.55" y="2215.30" font-size="28.5" font-family="Liberation Sans" fill="#000" textLength="61.41" lengthAdjust="spacingAndGlyphs">0.75</text>
<line x1="2189.65" y1="2173.40" x2="2189.65" y2="2183.90" stroke="#000" stroke-width="2.2"/>
<text x="2157.40" y="2215.30" font-size="28.5" font-family="Liberation Sans" fill="#000" textLength="62.49" lengthAdjust="spacingAndGlyphs">1.00</text>
<line x1="2382.61" y1="2173.40" x2="2382.61" y2="2183.90" stroke="#000" stroke-width="2.2"/>
<text x="2350.25" y="2215.30" font-size="28.5" font-family="Liberation Sans" fill="#000" textLength="63.55" lengthAdjust="spacingAndGlyphs">1.25</text>
<line x1="2575.57" y1="2173.40" x2="2575.57" y2="2183.90" stroke="#000" stroke-width="2.2"/>
<text x="2544.10" y="2215.30" font-size="28.5" font-family="Liberation Sans" fill="#000" textLength="62.47" lengthAdjust="spacingAndGlyphs">1.50</text>
<line x1="2768.54" y1="2173.40" x2="2768.54" y2="2183.90" stroke="#000" stroke-width="2.2"/>
<text x="2736.95" y="2215.30" font-size="28.5" font-family="Liberation Sans" fill="#000" textLength="62.47" lengthAdjust="spacingAndGlyphs">1.75</text>
<line x1="2961.50" y1="2173.40" x2="2961.50" y2="2183.90" stroke="#000" stroke-width="2.2"/>
<text x="2930.80" y="2215.30" font-size="28.5" font-family="Liberation Sans" fill="#000" textLength="61.41" lengthAdjust="spacingAndGlyphs">2.00</text>
<line x1="1410.70" y1="2110.50" x2="1421.70" y2="2110.50" stroke="#000" stroke-width="2.2"/>
<text x="1359.00" y="2121.00" font-size="28.5" font-family="Liberation Sans" fill="#000" textLength="41.04" lengthAdjust="spacingAndGlyphs">0.6</text>
<line x1="1410.70" y1="2016.02" x2="1421.70" y2="2016.02" stroke="#000" stroke-width="2.2"/>
<text x="1359.00" y="2026.52" font-size="28.5" font-family="Liberation Sans" fill="#000" textLength="41.04" lengthAdjust="spacingAndGlyphs">0.8</text>
<line x1="1410.70" y1="1921.54" x2="1421.70" y2="1921.54" stroke="#000" stroke-width="2.2"/>
<text x="1358.00" y="1932.04" font-size="28.5" font-family="Liberation Sans" fill="#000" textLength="41.04" lengthAdjust="spacingAndGlyphs">1.0</text>
<line x1="1410.70" y1="1827.06" x2="1421.70" y2="1827.06" stroke="#000" stroke-width="2.2"/>
<text x="1358.00" y="1837.56" font-size="28.5" font-family="Liberation Sans" fill="#000" textLength="42.15" lengthAdjust="spacingAndGlyphs">1.2</text>
<line x1="1410.70" y1="1732.58" x2="1421.70" y2="1732.58" stroke="#000" stroke-width="2.2"/>
<text x="1358.00" y="1743.08" font-size="28.5" font-family="Liberation Sans" fill="#000" textLength="41.04" lengthAdjust="spacingAndGlyphs">1.4</text>
<line x1="1410.70" y1="1638.10" x2="1421.70" y2="1638.10" stroke="#000" stroke-width="2.2"/>
<text x="1358.00" y="1648.60" font-size="28.5" font-family="Liberation Sans" fill="#000" textLength="41.07" lengthAdjust="spacingAndGlyphs">1.6</text>
<line x1="1410.70" y1="1543.62" x2="1421.70" y2="1543.62" stroke="#000" stroke-width="2.2"/>
<text x="1358.00" y="1554.12" font-size="28.5" font-family="Liberation Sans" fill="#000" textLength="41.07" lengthAdjust="spacingAndGlyphs">1.8</text>
<text x="1983.00" y="1440.90" font-size="37" font-family="Liberation Sans" fill="#000" textLength="478.00" lengthAdjust="spacingAndGlyphs">(b) Bifurcation diagram for y</text>
<text x="2137.00" y="2257.60" font-size="29.5" font-family="Liberation Sans" fill="#000" textLength="148.61" lengthAdjust="spacingAndGlyphs">Parameter</text>
<text x="2293.40" y="2257.60" font-size="29.5" font-family="Liberation Sans" fill="#000" font-style="italic" textLength="16.94" lengthAdjust="spacingAndGlyphs">θ</text>
<g transform="translate(1335.5,1845.4) rotate(-90)"><text x="0" y="0" font-size="29.5" font-family="Liberation Sans" textLength="57" lengthAdjust="spacingAndGlyphs"><tspan font-style="italic">y</tspan>(<tspan font-style="italic">θ</tspan>)</text></g></svg>
</body></html>
